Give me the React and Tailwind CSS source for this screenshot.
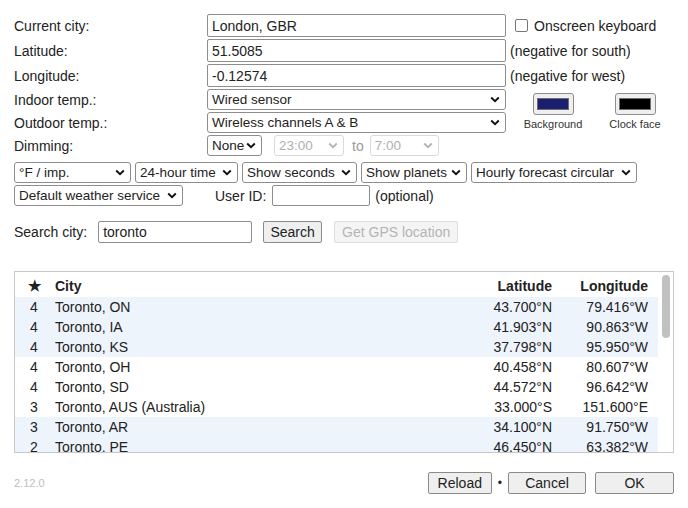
import clsx from 'clsx';

const cities = [
  { stars: 4, name: 'Toronto, ON', lat: '43.700°N', lon: '79.416°W' },
  { stars: 4, name: 'Toronto, IA', lat: '41.903°N', lon: '90.863°W' },
  { stars: 4, name: 'Toronto, KS', lat: '37.798°N', lon: '95.950°W' },
  { stars: 4, name: 'Toronto, OH', lat: '40.458°N', lon: '80.607°W' },
  { stars: 4, name: 'Toronto, SD', lat: '44.572°N', lon: '96.642°W' },
  { stars: 3, name: 'Toronto, AUS (Australia)', lat: '33.000°S', lon: '151.600°E' },
  { stars: 3, name: 'Toronto, AR', lat: '34.100°N', lon: '91.750°W' },
  { stars: 2, name: 'Toronto, PE', lat: '46.450°N', lon: '63.382°W' },
  { stars: 2, name: 'Toronto, NSW', lat: '33.011°S', lon: '151.599°E' },
];

function Chevron({ disabled }) {
  return (
    <svg width="10" height="7" viewBox="0 0 10 7" className="shrink-0">
      <path
        d="M1.2 1.5 L5 5.2 L8.8 1.5"
        fill="none"
        stroke={disabled ? '#b5b5b5' : '#111'}
        strokeWidth="1.9"
      />
    </svg>
  );
}

// fake native select, sized to match the picture
function Select({ label, className, disabled }) {
  return (
    <div
      className={clsx(
        'flex items-center justify-between h-[21px] pl-[4px] pr-[5px] border rounded-[3px] bg-white whitespace-nowrap text-[13.5px]',
        disabled ? 'border-[#dadada] text-[#b0b0b0]' : 'border-[#8d8d8d]',
        className
      )}
    >
      <span>{label}</span>
      <Chevron disabled={disabled} />
    </div>
  );
}

function TextBox({ value, className, h = 'h-[23px]' }) {
  return (
    <div className={clsx('flex items-center px-[4px] border border-[#8d8d8d] rounded-[2px] bg-white', h, className)}>
      {value}
    </div>
  );
}

function Button({ children, className, disabled }) {
  return (
    <div
      className={clsx(
        'flex items-center justify-center h-[22px] border rounded-[2px]',
        disabled ? 'border-[#dcdcdc] bg-[#f4f4f4] text-[#b4b4b4]' : 'border-[#8a8a8a] bg-[#efefef]',
        className
      )}
    >
      {children}
    </div>
  );
}

function ColorPick({ color, label, className }) {
  return (
    <div className={clsx('flex flex-col items-center', className)}>
      <div className="flex items-center justify-center w-[41px] h-[22px] border border-[#8d8d8d] rounded-[3px] bg-[#efefef]">
        <div className="w-[32px] h-[12px] border border-[#6f6f6f]" style={{ backgroundColor: color }} />
      </div>
      <span className="text-[11px] leading-[13px] mt-[3px] text-[#333]">{label}</span>
    </div>
  );
}

export default function App() {
  return (
    <div className="w-[688px] h-[508px] overflow-hidden bg-white text-[14px] leading-[16px] text-[#222] font-['Liberation_Sans',Arial,sans-serif] px-[14px] pt-[14px] flex flex-col">
      {/* settings grid */}
      <div className="grid grid-cols-[189px_299px_1fr] gap-x-[4px] gap-y-[2px] items-center">
        <span>Current city:</span>
        <TextBox value="London, GBR" />
        <div className="flex items-center">
          <div className="w-[13px] h-[13px] ml-[5px] border border-[#767676] rounded-[2px] bg-white" />
          <span className="ml-[6px]">Onscreen keyboard</span>
        </div>

        <span>Latitude:</span>
        <TextBox value="51.5085" />
        <span>(negative for south)</span>

        <span>Longitude:</span>
        <TextBox value="-0.12574" />
        <span>(negative for west)</span>

        <span>Indoor temp.:</span>
        <Select label="Wired sensor" />
        <div className="row-span-2 flex items-start self-center pt-[1px]">
          <ColorPick color="#1b1f70" label="Background" className="ml-[13px] w-[60px]" />
          <ColorPick color="#000000" label="Clock face" className="ml-[26px] w-[52px]" />
        </div>

        <span>Outdoor temp.:</span>
        <Select label="Wireless channels A & B" />

        <span>Dimming:</span>
        <div className="col-span-2 flex items-center">
          <Select label="None" className="w-[55px]" />
          <Select label="23:00" disabled className="w-[70px] ml-[12px]" />
          <span className="ml-[8px] text-[#9a9a9a]">to</span>
          <Select label="7:00" disabled className="w-[69px] ml-[6px]" />
        </div>
      </div>

      {/* display options */}
      <div className="flex items-center gap-[4px] mt-[6px]">
        <Select label="°F / imp." className="w-[117px]" />
        <Select label="24-hour time" className="w-[103px]" />
        <Select label="Show seconds" className="w-[115px]" />
        <Select label="Show planets" className="w-[106px]" />
        <Select label="Hourly forecast circular" className="w-[166px]" />
      </div>

      <div className="flex items-center mt-[2px]">
        <Select label="Default weather service" className="w-[169px]" />
        <span className="ml-[32px]">User ID:</span>
        <TextBox value="" h="h-[21px]" className="w-[98px] ml-[6px]" />
        <span className="ml-[5px]">(optional)</span>
      </div>

      {/* search */}
      <div className="flex items-center mt-[15px]">
        <span>Search city:</span>
        <TextBox value="toronto" h="h-[22px]" className="w-[154px] ml-[11px]" />
        <Button className="w-[59px] ml-[11px]">Search</Button>
        <Button disabled className="w-[124px] ml-[12px]">Get GPS location</Button>
      </div>

      {/* results table */}
      <div className="flex mt-[28px] h-[182px] border border-[#c8c8c8] overflow-hidden">
        <div className="flex-1 flex flex-col">
          <div className="flex items-center h-[25px] pt-[3px] pr-[10px] font-bold shrink-0">
            <span className="w-[38px] text-center text-[15px]">★</span>
            <span className="flex-1 pl-[2px]">City</span>
            <span className="w-[95px] text-right">Latitude</span>
            <span className="w-[96px] text-right">Longitude</span>
          </div>
          {cities.map((c, i) => (
            <div
              key={c.name}
              className={clsx(
                'flex items-center h-[20px] pr-[10px] shrink-0',
                Math.floor(i / 3) % 2 === 0 ? 'bg-[#eef4fc]' : 'bg-white'
              )}
            >
              <span className="w-[38px] text-center">{c.stars}</span>
              <span className="flex-1 pl-[2px]">{c.name}</span>
              <span className="w-[95px] text-right">{c.lat}</span>
              <span className="w-[96px] text-right">{c.lon}</span>
            </div>
          ))}
        </div>
        {/* scrollbar */}
        <div className="w-[15px] shrink-0 bg-white flex justify-center pt-[3px]">
          <div className="w-[8px] h-[63px] rounded-full bg-[#c1c1c1]" />
        </div>
      </div>

      {/* footer */}
      <div className="flex items-center mt-[19px]">
        <span className="text-[11px] text-[#bdbdbd]">2.12.0</span>
        <div className="ml-auto flex items-center">
          <Button className="w-[64px]">Reload</Button>
          <span className="mx-[6px] text-[12px]">•</span>
          <Button className="w-[78px]">Cancel</Button>
          <Button className="w-[79px] ml-[9px]">OK</Button>
        </div>
      </div>
    </div>
  );
}
